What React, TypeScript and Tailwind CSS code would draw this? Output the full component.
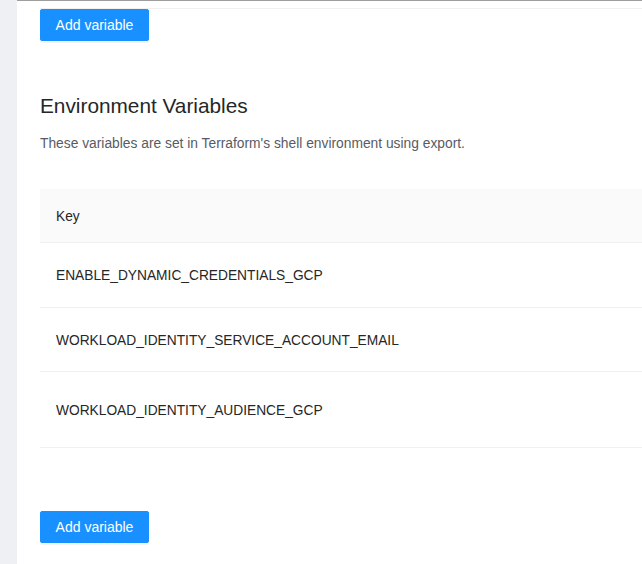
const rows = [
  { key: 'ENABLE_DYNAMIC_CREDENTIALS_GCP', h: 'h-[65px]' },
  { key: 'WORKLOAD_IDENTITY_SERVICE_ACCOUNT_EMAIL', h: 'h-[64px]' },
  { key: 'WORKLOAD_IDENTITY_AUDIENCE_GCP', h: 'h-[76px]' },
];

function AddButton() {
  return (
    <button
      type="button"
      className="h-[32px] w-[109px] rounded-[2px] border border-[#1890ff] bg-[#1890ff] text-[14px] leading-[22px] text-white shadow-[0_2px_0_rgba(0,0,0,0.045)]"
    >
      Add variable
    </button>
  );
}

export default function App() {
  return (
    <div
      className="flex h-[564px] w-[642px] overflow-hidden bg-white"
      style={{ fontFamily: '"Liberation Sans", Arial, sans-serif' }}
    >
      <div className="w-[17px] shrink-0 bg-[#eff0f4]" />
      <div className="flex-1 border-t border-[#9e9e9e] bg-white pl-[23px]">
        <div className="h-[8px] w-[700px] border-b border-[#f0f0f0]" />
        <AddButton />

        <h2 className="mt-[51px] text-[20.8px] leading-[28px] font-normal text-[#262626]">
          Environment Variables
        </h2>
        <p className="mt-[13px] text-[13.8px] leading-[22px] text-[#585b63]">
          These variables are set in Terraform's shell environment using export.
        </p>

        <div className="mt-[34px] w-[700px] text-[13.75px] leading-[22px] text-[#262626]">
          <div className="box-border flex h-[54px] items-center border-b border-[#f0f0f0] bg-[#fafafa] px-4 pt-[2px]">
            Key
          </div>
          {rows.map((row) => (
            <div
              key={row.key}
              className={`box-border flex ${row.h} items-center border-b border-[#f0f0f0] px-4 pt-[2px]`}
            >
              {row.key}
            </div>
          ))}
        </div>

        <div className="mt-[63px]">
          <AddButton />
        </div>
      </div>
    </div>
  );
}
